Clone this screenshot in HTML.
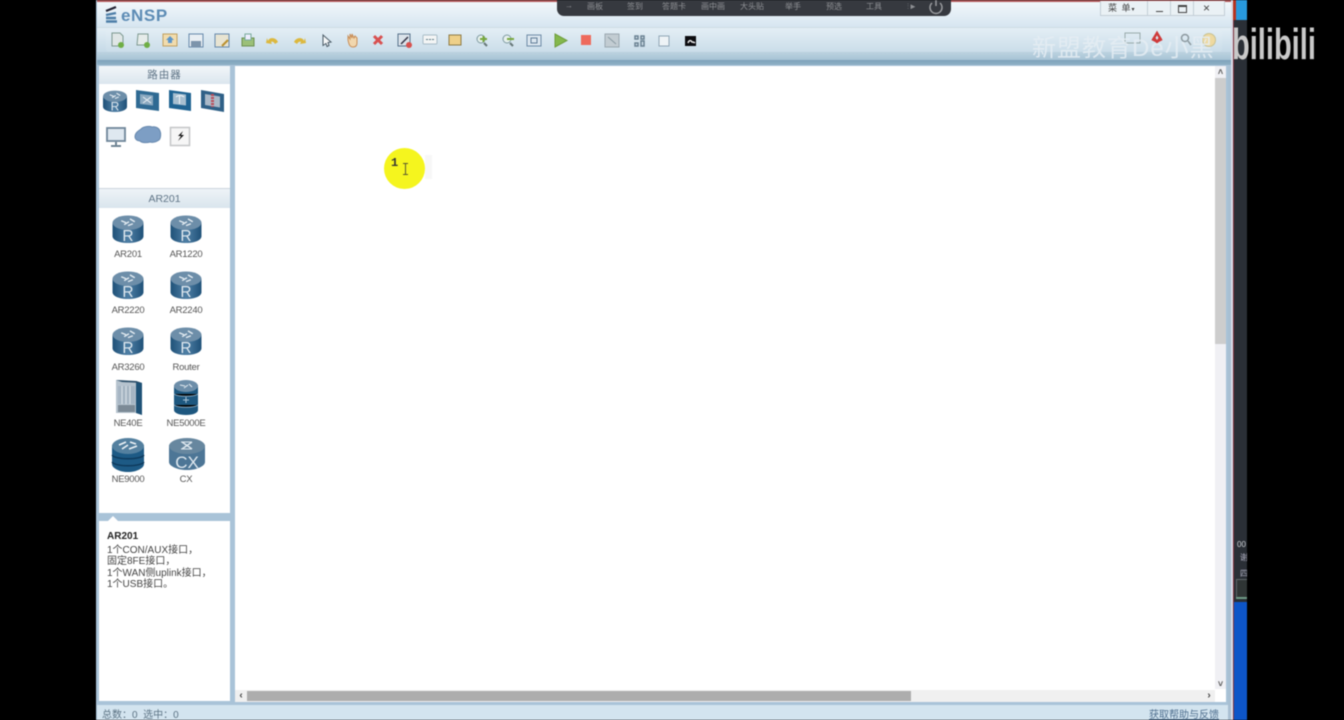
<!DOCTYPE html>
<html><head><meta charset="utf-8"><style>
html,body{margin:0;padding:0;background:#000}
body{width:1344px;height:720px;position:relative;overflow:hidden;font-family:"Liberation Sans","Noto Sans CJK SC",sans-serif}
div,span,svg{position:absolute}
#w{left:0;top:0;width:1344px;height:720px;overflow:hidden;filter:blur(.45px)}
.t{white-space:nowrap;text-align:center}
.lab{font-size:9.500px;letter-spacing:-.25px;color:#555;width:70px;text-align:center;line-height:12px;white-space:nowrap}
.tb{left:0;top:0}
.m{font-size:8px;color:#8d8f93;top:2px;width:30px;text-align:center;line-height:10px}
</style></head><body><div id="w">
<svg width="0" height="0" style="left:0;top:0"><defs>
<linearGradient id="rg" x1="0" x2="1" y1="0" y2="0"><stop offset="0" stop-color="#1f5178"/><stop offset=".5" stop-color="#4f7fa5"/><stop offset="1" stop-color="#1f5178"/></linearGradient>
<symbol id="router" viewBox="0 0 32 30">
<path d="M0 8v14c0 4 7 7 16 7s16-3 16-7V8z" fill="url(#rg)"/>
<ellipse cx="16" cy="8" rx="16" ry="7.500" fill="#6d8ea9"/>
<path d="M9 6l5 2M12 10l5-3M18 4l5 3M16 11l5-2" stroke="#e4ecf2" stroke-width="1.400" fill="none"/>
<text x="16" y="27" font-family="Liberation Sans" font-size="16" fill="#dfe8ef" text-anchor="middle">R</text>
</symbol></defs></svg>

<!-- window -->
<div style="left:96px;top:0;width:1136px;height:720px;background:#a9c3d8"></div>
<div style="left:97px;top:0;width:1134px;height:2px;background:#b0585a"></div>
<div style="left:97px;top:2px;width:1134px;height:26px;background:linear-gradient(#f2f7fb,#d5e5f0)"></div>
<div style="left:97px;top:27px;width:1134px;height:26px;background:linear-gradient(#e3eef5,#c3d8e6);border-top:1px solid #cfdce4"></div>
<div style="left:97px;top:52px;width:1134px;height:8px;background:linear-gradient(#bcd2e0,#a7c3d5)"></div>
<div style="left:97px;top:60px;width:1134px;height:5px;background:linear-gradient(#7ea3ba,#8fb0c6)"></div>
<div style="left:106px;top:30px;width:1116px;height:22px;border-radius:3px;background:linear-gradient(#e2edf4,#cadde9)"></div>

<!-- logo -->
<svg class="tb" width="30" height="28" style="left:100px;top:0"><path d="M6 15l10-2M6 18h10M6 21.500h11" stroke="#4d7ea8" stroke-width="2.400" fill="none"/><path d="M6 11l10-4" stroke="#223" stroke-width="2.200" fill="none"/></svg>
<div class="t" style="left:121px;top:6px;font:bold 17px/19px 'Liberation Sans',sans-serif;color:#5d8cb5;letter-spacing:.6px">eNSP</div>

<!-- toolbar icons -->
<svg class="tb" width="720" height="60" style="left:0;top:0" fill="none">
<path d="M112 33h8l3 3v10h-11z" fill="#dfe6e6" stroke="#7d9990"/><circle cx="121" cy="45" r="3" fill="#6fae45"/>
<path d="M138 34h10v11h-11z" fill="#e6ecea" stroke="#7d9990"/><circle cx="147" cy="45" r="3" fill="#6fae45"/>
<rect x="163" y="34" width="14" height="12" fill="#f1dcae" stroke="#c0a060"/><path d="M170 36l4 4h-2v3h-4v-3h-2z" fill="#5c95c9"/>
<rect x="189" y="34" width="14" height="13" fill="#e8eef3" stroke="#6588ab"/><rect x="191" y="41" width="10" height="6" fill="#7c94ab"/>
<rect x="215" y="34" width="14" height="13" fill="#e8e4d2" stroke="#6588ab"/><path d="M222 46l6-6" stroke="#b9902e" stroke-width="2"/>
<path d="M242 38h12v8h-12z" fill="#9bc078" stroke="#6b8f50"/><rect x="245" y="34" width="6" height="6" fill="#eef"  stroke="#7a9"/>
<path d="M268 41c1-4 8-4 10 1l-3 2c-1-2-3-3-4-2l1 2-6-1 1-5z" fill="#dcb83e"/>
<path d="M304 41c-1-4-8-4-10 1l3 2c1-2 3-3 4-2l-1 2 6-1-1-5z" fill="#dcb83e"/>
<path d="M323 35l8 7-3 .5 1 3-2 1-1-3-3 2z" fill="#f4f6f7" stroke="#4a5a66"/>
<path d="M348 40v-4l2 3v-5l2 4v-4l2 4 1-2 2 2v5c0 3-2 4-4 4-3 0-4-2-5-7z" fill="#f1d7ae" stroke="#c98e57"/>
<path d="M374 36l8 8M382 36l-8 8" stroke="#d85050" stroke-width="3"/>
<rect x="398" y="34" width="12" height="12" fill="#dbe3ea" stroke="#56718b"/><path d="M401 44l7-7" stroke="#334" stroke-width="1.500"/><circle cx="409" cy="45" r="3" fill="#d8514e"/>
<rect x="423" y="35" width="14" height="9" rx="1" fill="#f3f5f5" stroke="#a8bcc7"/><path d="M426 39.500h8" stroke="#5d7a86" stroke-dasharray="2 1"/>
<rect x="449" y="35" width="12" height="10" fill="#eed089" stroke="#8d7b47"/>
<circle cx="481" cy="39" r="4" fill="#e7f0ee" stroke="#7d9aa0"/><path d="M480 39h7M483.500 36v6" stroke="#78a83d" stroke-width="2"/><path d="M484 43l3 3" stroke="#677"  stroke-width="2"/>
<circle cx="507" cy="39" r="4" fill="#e7f0ee" stroke="#7d9aa0"/><path d="M507 39h7" stroke="#78a83d" stroke-width="2"/><path d="M510 43l3 3" stroke="#677" stroke-width="2"/>
<rect x="527" y="35" width="14" height="11" fill="#dce7ef" stroke="#6c8aa6"/><rect x="531" y="38" width="6" height="5" stroke="#5d7a96"/>
<path d="M555 34l12 6.500-12 6.500z" fill="#84b84c" stroke="#6f9e3d"/>
<rect x="581" y="35" width="10" height="10" fill="#ee6a5c"/>
<rect x="605" y="34" width="14" height="13" fill="#c2ccd2" stroke="#9aa8b0"/><path d="M608 37l8 7" stroke="#8a9aa2"/>
<path d="M635 36h3v3h-3zM641 36h3v3h-3zM635 43h3v3h-3zM641 41h3v5h-3z" stroke="#6a8192" stroke-width="1.500"/>
<rect x="659" y="36" width="10" height="10" fill="#eef3f6" stroke="#90a6b6"/>
<rect x="685" y="36" width="11" height="10" fill="#0c0c10"/><path d="M688 43c1-3 3-3 4-1 1 0 2 0 3 1" stroke="#e8e8e8" stroke-width="1.500"/>
</svg>

<!-- dark overlay bar -->
<div style="left:557px;top:-4px;width:394px;height:20px;background:#36393f;border-radius:0 0 7px 7px"></div>
<div class="m" style="left:554px;top:1px">→</div>
<div class="m" style="left:580px">画板</div>
<div class="m" style="left:620px">签到</div>
<div class="m" style="left:659px">答题卡</div>
<div class="m" style="left:698px">画中画</div>
<div class="m" style="left:737px">大头贴</div>
<div class="m" style="left:778px">举手</div>
<div class="m" style="left:819px">预选</div>
<div class="m" style="left:859px">工具</div>
<div class="m" style="left:897px">⫶►</div>
<svg style="left:927px;top:-1px" width="18" height="16" fill="none" stroke="#9a9c9f" stroke-width="1.500"><path d="M5 4a6 6 0 1 0 8 0M9 0v7"/></svg>

<!-- window buttons -->
<div style="left:1100px;top:1px;width:123px;height:14px;background:#eaf1f5;border:1px solid #c3ced6;border-top:0"></div>
<div style="left:1147px;top:1px;width:1px;height:14px;background:#c3ced6"></div>
<div style="left:1170px;top:1px;width:1px;height:14px;background:#c3ced6"></div>
<div style="left:1193px;top:1px;width:1px;height:14px;background:#c3ced6"></div>
<div class="t" style="left:1108px;top:2px;font-size:9px;line-height:12px;color:#444;letter-spacing:1px">菜 单<span style="position:static;font-size:6px">▾</span></div>
<div style="left:1156px;top:11px;width:7px;height:1px;background:#444"></div>
<div style="left:1178px;top:5px;width:7px;height:5px;border:1px solid #444;border-top:2px solid #444"></div>
<div class="t" style="left:1203px;top:1px;font-size:12px;line-height:14px;color:#444">×</div>

<!-- right toolbar icons + watermark -->
<svg style="left:1120px;top:30px" width="100" height="30" fill="none">
<rect x="5" y="3" width="15" height="10" stroke="#9aa"/><path d="M34 8l3-5 3 5-3 4zM32 9l4 2M42 9l-4 2" stroke="#cf3a3a" stroke-width="2.500"/>
<circle cx="65" cy="8" r="3.500" stroke="#8d9aa0" stroke-width="1.500"/><path d="M68 11l3 4" stroke="#8d9aa0" stroke-width="1.500"/>
<circle cx="89" cy="10" r="6.500" fill="#eed9a0" stroke="#c9c292"/>
</svg>
<div class="t" style="left:1032px;top:35px;font-size:24px;line-height:28px;color:#e6eef4;opacity:.85;letter-spacing:1px">新盟教育De小黑</div>

<!-- left panel -->
<div style="left:99px;top:66px;width:131px;height:447px;background:#fff"></div>
<div class="t" style="left:99px;top:66px;width:131px;height:18px;line-height:18px;font-size:10.500px;color:#5f7486;background:linear-gradient(#f2f6f9,#dbe6ee);letter-spacing:1px">路由器</div>
<svg style="left:99px;top:86px" width="131" height="64" fill="none">
<use href="#router" x="4" y="4" width="24" height="23"/>
<g><path d="M37 4l23 3v18l-23-3z" fill="#2f6a93"/><path d="M41 8l13 1.500v10l-13-1.500z" fill="#8ba9c0"/><path d="M44 11l8 6M52 11l-8 6" stroke="#e8eff4"/></g>
<g><path d="M70 4l22 3v18l-22-3z" fill="#1f6392"/><path d="M74 7l13 1.500v11l-13-1.500z" fill="#a7bfd0"/><path d="M80.500 9v9M77 11c2-2 6-2 8 0" stroke="#f0f4f7"/></g>
<g><path d="M102 4l23 4v18l-23-4z" fill="#2f6087"/><path d="M106 8l15 2.500v11l-15-2.500z" fill="#aab9c8"/><path d="M113.500 8v13" stroke="#bb4d5a" stroke-width="3" stroke-dasharray="2 1"/></g>
<rect x="8" y="42" width="18" height="13" fill="#dfe8f0" stroke="#6f8699" stroke-width="1.800"/><path d="M17 56v3M12 60h10" stroke="#5f7688" stroke-width="1.800"/>
<path d="M36 51c0-4 3-6 6-8 3-3 9-3 11-2 3-1 7 1 8 4 1 2 1 7-1 9-3 2-6 3-9 2-3 1-8 1-10-1-3 0-5-2-5-4z" fill="#7d9ec4" stroke="#6688ad"/>
<rect x="71.500" y="41.500" width="19" height="18" fill="#f6f6f6" stroke="#c4c6c8" stroke-width="1.500"/><path d="M84 45l-5 5h3l-3 5 6-6h-3z" fill="#111"/>
</svg>
<div style="left:99px;top:188px;width:131px;height:20px;background:linear-gradient(#eef3f7,#d9e5ed);border-top:1px solid #ccd6de;box-sizing:border-box"></div>
<div class="t" style="left:99px;top:193px;width:131px;font-size:10.500px;line-height:13px;color:#5f7486">AR201</div>

<svg style="left:112px;top:215px" width="32" height="29"><use href="#router" width="32" height="29"/></svg>
<svg style="left:170px;top:215px" width="32" height="29"><use href="#router" width="32" height="29"/></svg>
<div class="lab" style="left:93px;top:249px">AR201</div><div class="lab" style="left:151px;top:249px">AR1220</div>
<svg style="left:112px;top:271px" width="32" height="29"><use href="#router" width="32" height="29"/></svg>
<svg style="left:170px;top:271px" width="32" height="29"><use href="#router" width="32" height="29"/></svg>
<div class="lab" style="left:93px;top:305px">AR2220</div><div class="lab" style="left:151px;top:305px">AR2240</div>
<svg style="left:112px;top:327px" width="32" height="29"><use href="#router" width="32" height="29"/></svg>
<svg style="left:170px;top:327px" width="32" height="29"><use href="#router" width="32" height="29"/></svg>
<div class="lab" style="left:93px;top:362px">AR3260</div><div class="lab" style="left:151px;top:362px">Router</div>

<svg style="left:112px;top:378px" width="32" height="38">
<path d="M4 2l20 1 6 2v32l-6-2H4z" fill="#b6c3ce"/><path d="M24 3l6 2v32l-6-2z" fill="#1f5277"/><path d="M4 2l20 1 6 2-20-1z" fill="#2b4d68"/>
<rect x="6" y="8" width="17" height="18" fill="#a6b5c3"/><path d="M10 8v18M14 8v18M18 8v18" stroke="#dbe3e9"/><rect x="6" y="27" width="17" height="7" fill="#7c8a96"/>
</svg>
<svg style="left:172px;top:379px" width="30" height="37">
<path d="M2 6v25c0 3 5 5 12 5s12-2 12-5V6z" fill="#1d577f"/><ellipse cx="14" cy="7" rx="12" ry="6" fill="#6d8ea9"/>
<path d="M8 6l5 1M12 9l4-3M17 5l3 3" stroke="#e4ecf2"/><path d="M2 15c4 3 20 3 24 0M2 26c4 3 20 3 24 0" stroke="#85a7c0"/><path d="M11 21h6M14 18v6" stroke="#a9c3d6"/>
</svg>
<div class="lab" style="left:93px;top:474px">NE9000</div><div class="lab" style="left:151px;top:474px">CX</div>
<div class="lab" style="left:93px;top:418px">NE40E</div><div class="lab" style="left:151px;top:418px">NE5000E</div>

<svg style="left:111px;top:437px" width="34" height="36">
<path d="M1 8v19c0 4 7 8 16 8s16-4 16-8V8z" fill="#1d5a85"/><ellipse cx="17" cy="9" rx="16" ry="8" fill="#54809f"/>
<path d="M8 8l7-3M11 12l6-4M19 5l6 2M18 12l8-3" stroke="#eef3f7" stroke-width="1.600"/>
<path d="M1 18c3 5 29 5 32 0M1 25c3 5 29 5 32 0" stroke="#0e3a5c" stroke-width="1.500" fill="none"/>
</svg>
<svg style="left:168px;top:437px" width="38" height="34">
<path d="M1 8v17c0 4 8 8 18 8s18-4 18-8V8z" fill="#4d7696"/><ellipse cx="19" cy="9" rx="18" ry="8" fill="#67879f"/>
<path d="M14 5l10 7M24 5l-10 7" stroke="#dde7ee" stroke-width="1.500"/><path d="M13 5h11M13 12h11" stroke="#dde7ee"/>
<text x="19" y="31" font-family="Liberation Sans" font-size="17" fill="#dfe8ef" text-anchor="middle">CX</text>
</svg>

<!-- info panel -->
<div style="left:99px;top:521px;width:131px;height:180px;background:#fff"></div>
<div style="left:108px;top:516px;width:0;height:0;border:5px solid transparent;border-top:0;border-bottom:5px solid #fff"></div>
<div style="left:107px;top:530px;font-weight:bold;font-size:10px;line-height:13px;color:#222">AR201</div>
<div style="left:107px;top:545px;font-size:10px;line-height:11.300px;color:#444;white-space:nowrap">1个CON/AUX接口，<br>固定8FE接口，<br>1个WAN侧uplink接口，<br>1个USB接口。</div>

<!-- canvas -->
<div style="left:235px;top:66px;width:991px;height:636px;background:#fff"></div>
<div style="left:1215px;top:66px;width:11px;height:623px;background:#f0f0f4"></div>
<div style="left:1215px;top:78px;width:11px;height:266px;background:#cdcdcd"></div>
<div class="t" style="left:1215px;top:66px;width:11px;font-size:9px;line-height:12px;color:#555;font-weight:bold">˄</div>
<div class="t" style="left:1215px;top:678px;width:11px;font-size:9px;line-height:12px;color:#555;font-weight:bold">˅</div>
<div style="left:235px;top:690px;width:980px;height:12px;background:#f0f0f0"></div>
<div style="left:247px;top:691px;width:664px;height:10px;background:#adadad"></div>
<div class="t" style="left:236px;top:690px;width:10px;font-size:10px;line-height:12px;color:#444;font-weight:bold">‹</div>
<div class="t" style="left:1204px;top:690px;width:10px;font-size:10px;line-height:12px;color:#444;font-weight:bold">›</div>

<!-- cursor highlight -->
<div style="left:384px;top:148px;width:41px;height:41px;border-radius:50%;background:#f5f51e"></div>
<div style="left:425px;top:155px;width:7px;height:24px;background:#f7f7f7"></div>
<div style="left:391px;top:157px;font:bold 12px/13px 'Liberation Mono',monospace;color:#333">1</div>
<svg style="left:402px;top:163px" width="8" height="13" fill="none" stroke="#5a5a30"><path d="M1 .5h5M3.500 .5v11M1 11.500h5"/></svg>

<!-- status bar -->
<div style="left:97px;top:705px;width:1134px;height:15px;background:#d3e4ef"></div>
<div style="left:102px;top:709px;font-size:10px;line-height:13px;color:#5c7384;white-space:nowrap">总数：0&nbsp; 选中：0</div>
<div style="left:1149px;top:709px;font-size:10px;line-height:13px;color:#4f6f8f;text-decoration:underline;white-space:nowrap">获取帮助与反馈</div>

<!-- right edge -->
<div style="left:1228px;top:66px;width:3px;height:654px;background:#a8bfd2"></div>
<div style="left:1231px;top:0;width:2px;height:720px;background:#d9dde8"></div>
<div style="left:1233px;top:0;width:1px;height:720px;background:#7c2f3b"></div>
<div style="left:1234px;top:20px;width:13px;height:582px;background:#2a2f36"></div>
<div style="left:1234px;top:0;width:13px;height:20px;background:#2899dd"></div>
<div style="left:1234px;top:602px;width:13px;height:118px;background:#0d55c8"></div>
<div style="left:1233px;top:0;width:3px;height:20px;background:#b8321e"></div>
<div class="t" style="left:1237px;top:540px;font-size:8px;line-height:10px;color:#c8ccd0">00</div>
<div class="t" style="left:1240px;top:553px;font-size:8px;line-height:10px;color:#aab">谢</div>
<div class="t" style="left:1240px;top:569px;font-size:8px;line-height:10px;color:#aab">四</div>
<div style="left:1236px;top:579px;width:11px;height:20px;border:1px solid #5f6668;border-right:0;box-sizing:border-box;background:#2f3535"></div>
<div style="left:1236px;top:597px;width:11px;height:2px;background:#6f9a86"></div>

<!-- bilibili -->
<div style="left:1247px;top:0;width:97px;height:720px;background:#000"></div>
<div class="t" style="left:1232px;top:21px;font:bold 44px/48px 'Liberation Sans',sans-serif;color:#c9c9c9;letter-spacing:0;transform:scaleX(.66);transform-origin:left top">bilibili</div>
</div></body></html>
